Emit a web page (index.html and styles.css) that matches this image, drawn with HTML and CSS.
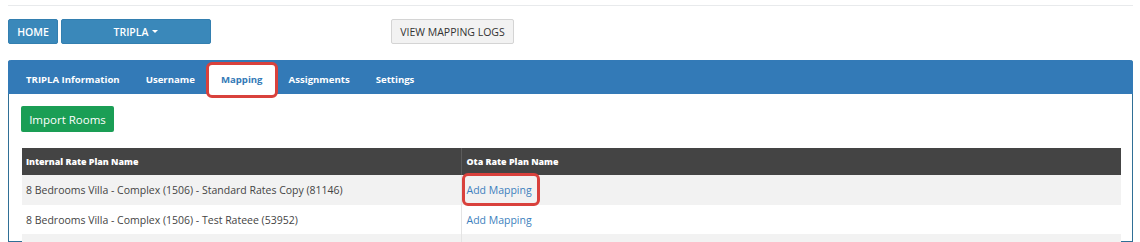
FILE: index.html
```html
<!DOCTYPE html>
<html>
<head>
<meta charset="utf-8">
<link rel="stylesheet" href="styles.css">
</head>
<body>
<div class="page">
  <div class="topline"></div>
  <div class="toolbar">
    <div class="btn-group">
      <a class="btn btn-blue btn-home">HOME</a>
      <a class="btn btn-blue btn-hotel">TRIPLA <span class="caret"></span></a>
    </div>
    <a class="btn btn-light">VIEW MAPPING LOGS</a>
  </div>
  <div class="panel">
    <ul class="tabs">
      <li class="tab">TRIPLA Information</li>
      <li class="tab">Username</li>
      <li class="tab active highlight">Mapping</li>
      <li class="tab">Assignments</li>
      <li class="tab">Settings</li>
    </ul>
    <div class="panel-body">
      <a class="btn btn-green">Import Rooms</a>
      <table class="grid">
        <thead>
          <tr><th class="c1">Internal Rate Plan Name</th><th>Ota Rate Plan Name</th></tr>
        </thead>
        <tbody>
          <tr class="odd"><td class="c1">8 Bedrooms Villa - Complex (1506) - Standard Rates Copy (81146)</td><td><a class="link highlight">Add Mapping</a></td></tr>
          <tr><td class="c1">8 Bedrooms Villa - Complex (1506) - Test Rateee (53952)</td><td><a class="link">Add Mapping</a></td></tr>
          <tr class="odd"><td class="c1">&nbsp;</td><td>&nbsp;</td></tr>
        </tbody>
      </table>
    </div>
  </div>
</div>
</body>
</html>
```

FILE: styles.css
```css
* { box-sizing: border-box; }
html, body { margin: 0; padding: 0; background: #fff; overflow: hidden; }
body { font-family: "Open Sans", "Noto Sans", sans-serif; color: #444; font-size: 11px; }
.page { padding: 0 7px 0 8px; height: 242px; overflow: hidden; }
.topline { margin-top: 5px; border-top: 1px solid #e8eaec; }
.toolbar { margin-top: 13px; display: flex; align-items: center; height: 25px; }
.btn-group { display: flex; gap: 3px; }
.btn { display: inline-flex; align-items: center; justify-content: center; height: 25px; border-radius: 2px; font-size: 10.5px; font-weight: 600; text-decoration: none; }
.btn-blue { background: #3a88ba; color: #fff; border: 1px solid #337fb0; }
.btn-home { width: 50px; }
.btn-hotel { width: 150px; }
.caret { display: inline-block; width: 0; height: 0; margin-left: 4px; border-left: 3.5px solid transparent; border-right: 3.5px solid transparent; border-top: 3.5px solid #fff; }
.btn-light { margin-left: 180px; width: 123px; background: #f2f2f2; color: #333; border: 1px solid #d4d4d4; font-weight: 500; }
.panel { margin-top: 16px; border: 1px solid #2f6f96; border-top: none; border-radius: 3px 3px 0 0; height: 182px; }
.tabs { list-style: none; margin: 0 -1px; padding: 4px 0 0 5px; height: 34px; background: #337ab7; display: flex; border-radius: 3px 3px 0 0; }
.tab { padding: 0 13px; height: 30px; display: flex; align-items: center; color: #fff; font-weight: 700; font-size: 9.6px; position: relative; }
.tab.active { background: #fff; color: #337ab7; border-radius: 3px 3px 0 0; }
.highlight { position: relative; }
.tab.highlight::after { content: ""; position: absolute; left: -2px; right: -2px; top: -2px; bottom: -4px; border: 3px solid #d9413c; border-radius: 6px; }
.panel-body { padding: 12px 11px 0 12px; }
.btn-green { width: 93px; height: 26px; background: #1a9e55; color: #fff; font-size: 11.5px; font-weight: 500; border-radius: 2px; }
.grid { margin-top: 16px; margin-left: 1px; width: 1099px; border-collapse: collapse; table-layout: fixed; }
.grid th, .grid td { text-align: left; padding: 0 4px; }
.grid th { background: #444; color: #fff; height: 27px; font-size: 8.9px; font-weight: 800; }
.grid th.c1 { border-right: 1px solid #5c5c5c; }
.grid th + th { padding-left: 5px; }
.grid .c1 { width: 439px; }
.grid td { height: 29px; font-size: 10.5px; color: #444; }
.grid td + td { padding-left: 5px; }
.grid tbody tr:first-child td { height: 30px; }
.grid td.c1 { border-right: 1px solid #e4e4e4; }
.grid tr.odd td { background: #f2f2f2; }
.link { color: #3d7fbd; text-decoration: none; }
.link.highlight { display: inline-block; }
.link.highlight::after { content: ""; position: absolute; left: -5px; right: -8px; top: -10px; bottom: -9px; border: 3px solid #d9413c; border-radius: 6px; }
```
